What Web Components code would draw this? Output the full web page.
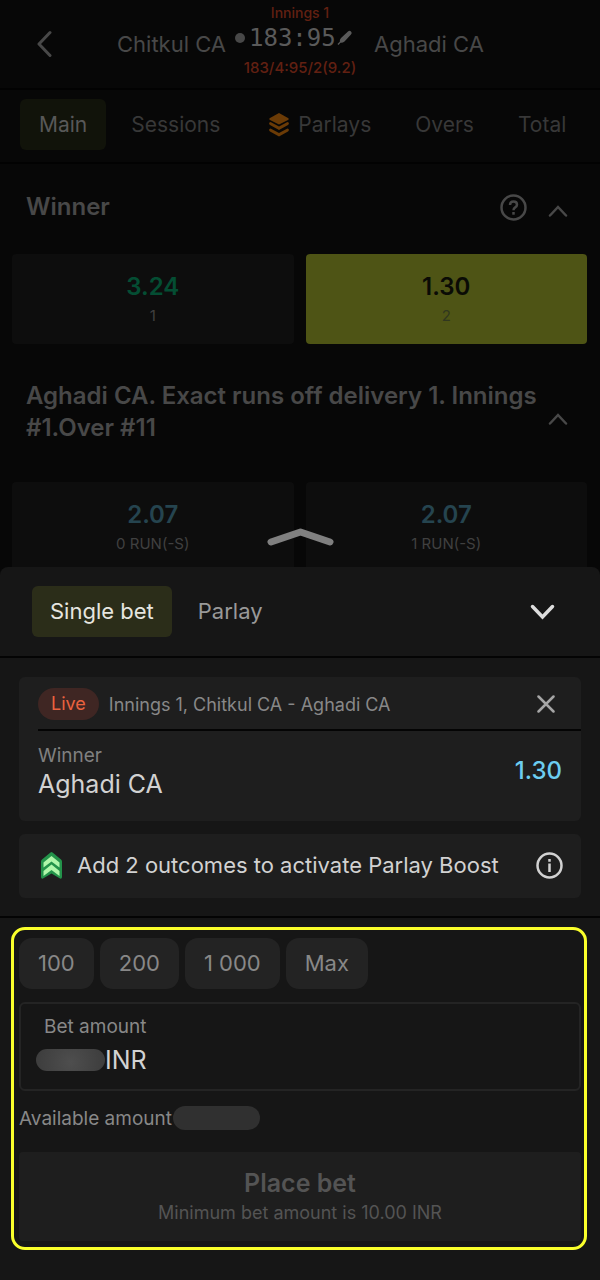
<!DOCTYPE html>
<html lang="en">
<head>
<meta charset="UTF-8">
<meta name="viewport" content="width=device-width, initial-scale=1">
<title>Chitkul CA - Aghadi CA</title>
<style>
  body {
    margin: 0;
    height: 100vh;
    overflow: hidden;
    background: #070707;
    color: #484848;
    font-family: Inter, "Liberation Sans", sans-serif;
    font-size: 21px;
  }
</style>
</head>
<body>
<match-view>
  <match-header home="Chitkul CA" away="Aghadi CA" period="Innings 1" score="183:95" detail="183/4:95/2(9.2)"></match-header>
  <market-tabs>
    <market-tab active>Main</market-tab>
    <market-tab>Sessions</market-tab>
    <market-tab icon>Parlays</market-tab>
    <market-tab>Overs</market-tab>
    <market-tab>Total</market-tab>
  </market-tabs>
  <market-section name="Winner" help>
    <odds-button odds="3.24" label="1" trend="up"></odds-button>
    <odds-button odds="1.30" label="2" selected></odds-button>
  </market-section>
  <market-section name="Aghadi CA. Exact runs off delivery 1. Innings #1.Over #11" long>
    <odds-button odds="2.07" label="0 RUN(-S)"></odds-button>
    <odds-button odds="2.07" label="1 RUN(-S)"></odds-button>
  </market-section>
</match-view>

<bet-slip>
  <slip-outcome event="Innings 1, Chitkul CA - Aghadi CA" market="Winner" pick="Aghadi CA" odds="1.30"></slip-outcome>
  <boost-banner>Add 2 outcomes to activate Parlay Boost</boost-banner>
  <stake-form slot="footer"></stake-form>
</bet-slip>

<script>
// --- Helpers ---
const resetCss = `
  * { box-sizing: border-box; }
  button, input { font: inherit; color: inherit; background: none; border: 0; margin: 0; padding: 0; }
  svg { display: block; fill: none; stroke: currentColor; flex: none; }
`;

class BaseElement extends HTMLElement {
  constructor() {
    super();
    this.attachShadow({ mode: 'open' });
  }

  connectedCallback() {
    this.shadowRoot.innerHTML = `<style>${resetCss}${this.styles()}</style>${this.markup()}`;
  }

  attr(name) {
    return this.getAttribute(name) || '';
  }
}

// --- Match page ---
class MatchView extends BaseElement {
  styles() {
    return `:host { display: flex; flex-direction: column; }`;
  }
  markup() {
    return `<slot></slot>`;
  }
}
customElements.define('match-view', MatchView);

class MatchHeader extends BaseElement {
  styles() {
    return `
      :host { display: block; border-bottom: 2px solid #020202; font-size: 22px; }
      header {
        display: grid;
        grid-template-columns: 1fr 130px 1fr;
        column-gap: 9px;
        align-items: center;
        height: 88px;
      }
      .home { display: flex; align-items: center; justify-content: space-between; padding-left: 36px; }
      .score-box { display: flex; flex-direction: column; align-items: center; align-self: start; padding-top: 3px; }
      .small { font-size: 14px; line-height: 20px; font-weight: 500; color: #622012; }
      .detail { font-size: 15px; line-height: 30px; }
      .score {
        display: flex;
        align-items: center;
        gap: 4px;
        align-self: flex-start;
        font: 24px/30px "DejaVu Sans Mono", "Liberation Mono", monospace;
        color: #5a5a5a;
      }
      .dot { width: 10px; height: 10px; border-radius: 50%; background: #484848; }
      .bat { fill: currentColor; stroke: none; margin-left: -3px; }
    `;
  }
  markup() {
    return `
      <header>
        <div class="home">
          <button aria-label="Back">
            <svg width="16" height="28" viewBox="0 0 16 28" stroke-width="3" stroke-linecap="round" stroke-linejoin="round"><path d="M14 2.500L3 14l11 11.500"/></svg>
          </button>
          <span>${this.attr('home')}</span>
        </div>
        <div class="score-box">
          <span class="small">${this.attr('period')}</span>
          <div class="score">
            <span class="dot"></span>
            <span>${this.attr('score')}</span>
            <svg class="bat" width="16" height="16" viewBox="0 0 16 16"><path d="M11 1.500q1.500-1.500 3 0 1.500 1.500 0 3L7.500 11.500q-1.800 1.500-4 1.200L1.500 15 .5 14l2.300-2.300q-.3-2.200 1.200-3.700z"/></svg>
          </div>
          <span class="small detail">${this.attr('detail')}</span>
        </div>
        <span>${this.attr('away')}</span>
      </header>
    `;
  }
}
customElements.define('match-header', MatchHeader);

class MarketTabs extends BaseElement {
  styles() {
    return `
      :host { display: block; border-bottom: 2px solid #020202; }
      nav { display: flex; gap: 6px; padding: 9px 12px 12px 20px; }
    `;
  }
  markup() {
    return `<nav><slot></slot></nav>`;
  }
}
customElements.define('market-tabs', MarketTabs);

class MarketTab extends BaseElement {
  styles() {
    return `
      :host { display: block; color: #383838; }
      :host([active]) { color: #585858; }
      :host([active]) button { background: #11130a; }
      button {
        display: flex;
        align-items: center;
        gap: 9px;
        height: 51px;
        padding: 0 19px;
        border-radius: 6px;
      }
      :host([icon]) button { padding-left: 24px; }
      svg { fill: #6b3b06; stroke: none; }
    `;
  }
  markup() {
    const icon = this.hasAttribute('icon')
      ? `<svg width="20" height="24" viewBox="0 0 20 24"><path d="M10 0l9 5q1.500 1 0 2l-9 4.500-9-4.500q-1.500-1 0-2z"/><path d="M.5 9.500q1-.8 2 0l7.500 4 7.500-4q1-.8 2 0 1 1.500-.5 2.500l-9 5-9-5q-1.500-1-.5-2.500z"/><path d="M.5 16q1-.8 2 0l7.500 4 7.500-4q1-.8 2 0 1 1.500-.5 2.500l-9 5-9-5q-1.500-1-.5-2.500z"/></svg>`
      : '';
    return `<button>${icon}<slot></slot></button>`;
  }
}
customElements.define('market-tab', MarketTab);

class MarketSection extends BaseElement {
  styles() {
    return `
      :host { display: block; padding: 27px 13px 9px 12px; }
      .title { display: flex; align-items: center; padding: 0 19px 0 14px; }
      h2 { flex: 1; margin: 0; padding-bottom: 7px; font-size: 24px; line-height: 32px; font-weight: 600; }
      :host([long]) h2 { padding-bottom: 14px; }
      .help { padding: 0 21px 7px 0; }
      .odds { display: grid; grid-template-columns: 1fr 1fr; gap: 12px; padding-top: 24px; }
    `;
  }
  markup() {
    const help = this.hasAttribute('help')
      ? `<button class="help" aria-label="Help"><svg width="27" height="27" viewBox="0 0 27 27" stroke-width="2.500"><circle cx="13.500" cy="13.500" r="12"/><path d="M10 11q0-3.500 3.500-3.500T17 10.700q0 1.600-1.800 2.700-1.700 1-1.700 2.800"/><path d="M13.500 18v2.700"/></svg></button>`
      : '';
    return `
      <div class="title">
        <h2>${this.attr('name')}</h2>
        ${help}
        <button aria-label="Collapse"><svg width="20" height="12" viewBox="0 0 20 12" stroke-width="2.500" stroke-linecap="round"><path d="M2 10.500l8-8.500 8 8.500"/></svg></button>
      </div>
      <div class="odds"><slot></slot></div>
    `;
  }
}
customElements.define('market-section', MarketSection);

class OddsButton extends BaseElement {
  styles() {
    return `
      :host { display: block; }
      button {
        display: flex;
        flex-direction: column;
        align-items: center;
        justify-content: center;
        gap: 2px;
        width: 100%;
        height: 90px;
        padding-top: 2px;
        border-radius: 4px;
        background: #0d0d0d;
      }
      .odds { font-size: 24px; line-height: 30px; font-weight: 600; color: #25444f; }
      .label { font-size: 15px; line-height: 24px; color: #404040; }
      :host([trend="up"]) .odds { color: #044d33; }
      :host([selected]) button { background: #4e5415; }
      :host([selected]) .odds { color: #0a0b05; }
      :host([selected]) .label { color: #30371f; }
    `;
  }
  markup() {
    return `
      <button>
        <span class="odds">${this.attr('odds')}</span>
        <span class="label">${this.attr('label')}</span>
      </button>
    `;
  }
}
customElements.define('odds-button', OddsButton);

// --- Bet slip ---
class BetSlip extends BaseElement {
  styles() {
    return `
      :host {
        position: fixed;
        left: 0;
        right: 0;
        bottom: 0;
        background: #161616;
        border-radius: 8px 8px 0 0;
        color: #d2d2d2;
        font-size: 22px;
      }
      .handle { position: absolute; left: 0; right: 0; bottom: 100%; display: flex; justify-content: center; padding-bottom: 20px; color: #808080; }
      .top { display: flex; align-items: center; gap: 8px; padding: 19px 44px 19px 32px; border-bottom: 2px solid #040404; }
      .tab { height: 51px; padding: 0 18px 2px; border-radius: 6px; color: #999; }
      .tab.active { background: #2b2d19; color: #e6e6e0; }
      .close { margin-left: auto; padding: 0 1px; color: #ddd; }
      .items { display: flex; flex-direction: column; gap: 13px; padding: 19px 19px 18px; border-bottom: 2px solid #040404; }
    `;
  }
  markup() {
    return `
      <div class="handle"><svg width="67" height="20" viewBox="0 0 67 20" stroke-width="7" stroke-linecap="round" stroke-linejoin="round"><path d="M4 15l29.500-10L63 15"/></svg></div>
      <div class="top">
        <button class="tab active">Single bet</button>
        <button class="tab">Parlay</button>
        <button class="close" aria-label="Close"><svg width="25" height="16" viewBox="0 0 25 16" stroke-width="3.500" stroke-linecap="round"><path d="M2.500 2.500l10 10.500 10-10.500"/></svg></button>
      </div>
      <div class="items"><slot></slot></div>
      <slot name="footer"></slot>
    `;
  }
}
customElements.define('bet-slip', BetSlip);

class SlipOutcome extends BaseElement {
  styles() {
    return `
      :host { display: block; padding-left: 19px; border-radius: 6px; background: #1e1e1e; }
      .event { display: flex; align-items: center; gap: 10px; height: 54px; padding: 2px 26px 0 0; border-bottom: 2px solid #040404; font-size: 18px; color: #888; }
      .live { padding: 0 13px; border-radius: 16px; line-height: 32px; background: #3f2623; color: #e9623f; }
      .remove { margin-left: auto; color: #a5a5a5; }
      .pick { display: flex; justify-content: space-between; padding: 12px 19px 22px 0; }
      .market { font-size: 19px; line-height: 26px; color: #808080; }
      .name { font-size: 25px; line-height: 30px; }
      .odds { padding-top: 12px; font-size: 24px; line-height: 32px; font-weight: 500; color: #6ccdf1; }
    `;
  }
  markup() {
    return `
      <div class="event">
        <span class="live">Live</span>
        <span>${this.attr('event')}</span>
        <button class="remove" aria-label="Remove"><svg width="18" height="18" viewBox="0 0 18 18" stroke-width="2.500" stroke-linecap="round"><path d="M1.500 1.500l15 15M16.500 1.500l-15 15"/></svg></button>
      </div>
      <div class="pick">
        <div>
          <div class="market">${this.attr('market')}</div>
          <div class="name">${this.attr('pick')}</div>
        </div>
        <div class="odds">${this.attr('odds')}</div>
      </div>
    `;
  }
}
customElements.define('slip-outcome', SlipOutcome);

class BoostBanner extends BaseElement {
  styles() {
    return `
      :host { display: flex; align-items: center; gap: 14px; height: 64px; padding: 0 18px 2px 21px; border-radius: 6px; background: #1e1e1e; box-sizing: border-box; }
      .boost { stroke: none; }
      button { margin-left: auto; }
    `;
  }
  markup() {
    return `
      <svg class="boost" width="23" height="27" viewBox="0 0 23 27">
        <path fill="#23934a" d="M10.500.5q1-.8 2 0l8.500 7q1 1 1 2V25q0 2-2 1.600l-8.500-5-8.500 5Q1 27 1 25V9.500q0-1 1-2z"/>
        <path fill="#b0f7aa" d="M11.500 4l8 6.500v5l-8-6-8 6v-5z"/>
        <path fill="#b0f7aa" d="M11.500 12.500l8 6.500v5l-8-6-8 6v-5z"/>
      </svg>
      <span><slot></slot></span>
      <button aria-label="Info"><svg width="27" height="27" viewBox="0 0 27 27" stroke-width="2.500"><circle cx="13.500" cy="13.500" r="12"/><path d="M13.500 11.500v8.500M13.500 7v2.800"/></svg></button>
    `;
  }
}
customElements.define('boost-banner', BoostBanner);

class StakeForm extends BaseElement {
  styles() {
    return `
      :host { display: block; padding: 9px 13px 30px 11px; }
      form { border: 3px solid #faff2b; border-radius: 14px; padding: 8px 3px 6px 5px; }
      .chips { display: flex; gap: 6px; }
      .chips button { height: 51px; padding: 0 19px 2px; border-radius: 13px; background: #232323; color: #888; }
      .field { display: block; margin-top: 13px; padding: 9px 15px 9px; border: 2px solid #242424; border-radius: 6px; }
      .field label { display: block; padding-left: 8px; font-size: 19px; line-height: 27px; color: #888; }
      .amount { display: flex; align-items: center; height: 40px; }
      .amount .mask { width: 69px; height: 22px; border-radius: 11px; background: radial-gradient(circle at 50% 60%, #4e4e4e, #3c3c3c); flex: none; }
      input { flex: 1; min-width: 0; font-size: 25px; outline: 0; }
      .available { display: flex; align-items: center; gap: 1px; height: 54px; font-size: 19px; color: #888; }
      .available .mask { width: 87px; height: 24px; border-radius: 12px; background: #303030; }
      .place { display: block; width: 100%; height: 89px; margin-top: 7px; border-radius: 4px; background: #1e1e1e; color: #545454; }
      .place b { display: block; font-size: 25px; line-height: 32px; font-weight: 600; }
      .place span { display: block; font-size: 18px; line-height: 28px; }
    `;
  }
  markup() {
    const amounts = ['100', '200', '1 000', 'Max'];
    return `
      <form>
        <div class="chips">${amounts.map(a => `<button type="button">${a}</button>`).join('')}</div>
        <div class="field">
          <label for="amount">Bet amount</label>
          <div class="amount"><span class="mask"></span><input id="amount" type="text" value="INR"></div>
        </div>
        <div class="available"><span>Available amount</span><span class="mask"></span></div>
        <button class="place" disabled><b>Place bet</b><span>Minimum bet amount is 10.00 INR</span></button>
      </form>
    `;
  }
}
customElements.define('stake-form', StakeForm);
</script>
</body>
</html>
